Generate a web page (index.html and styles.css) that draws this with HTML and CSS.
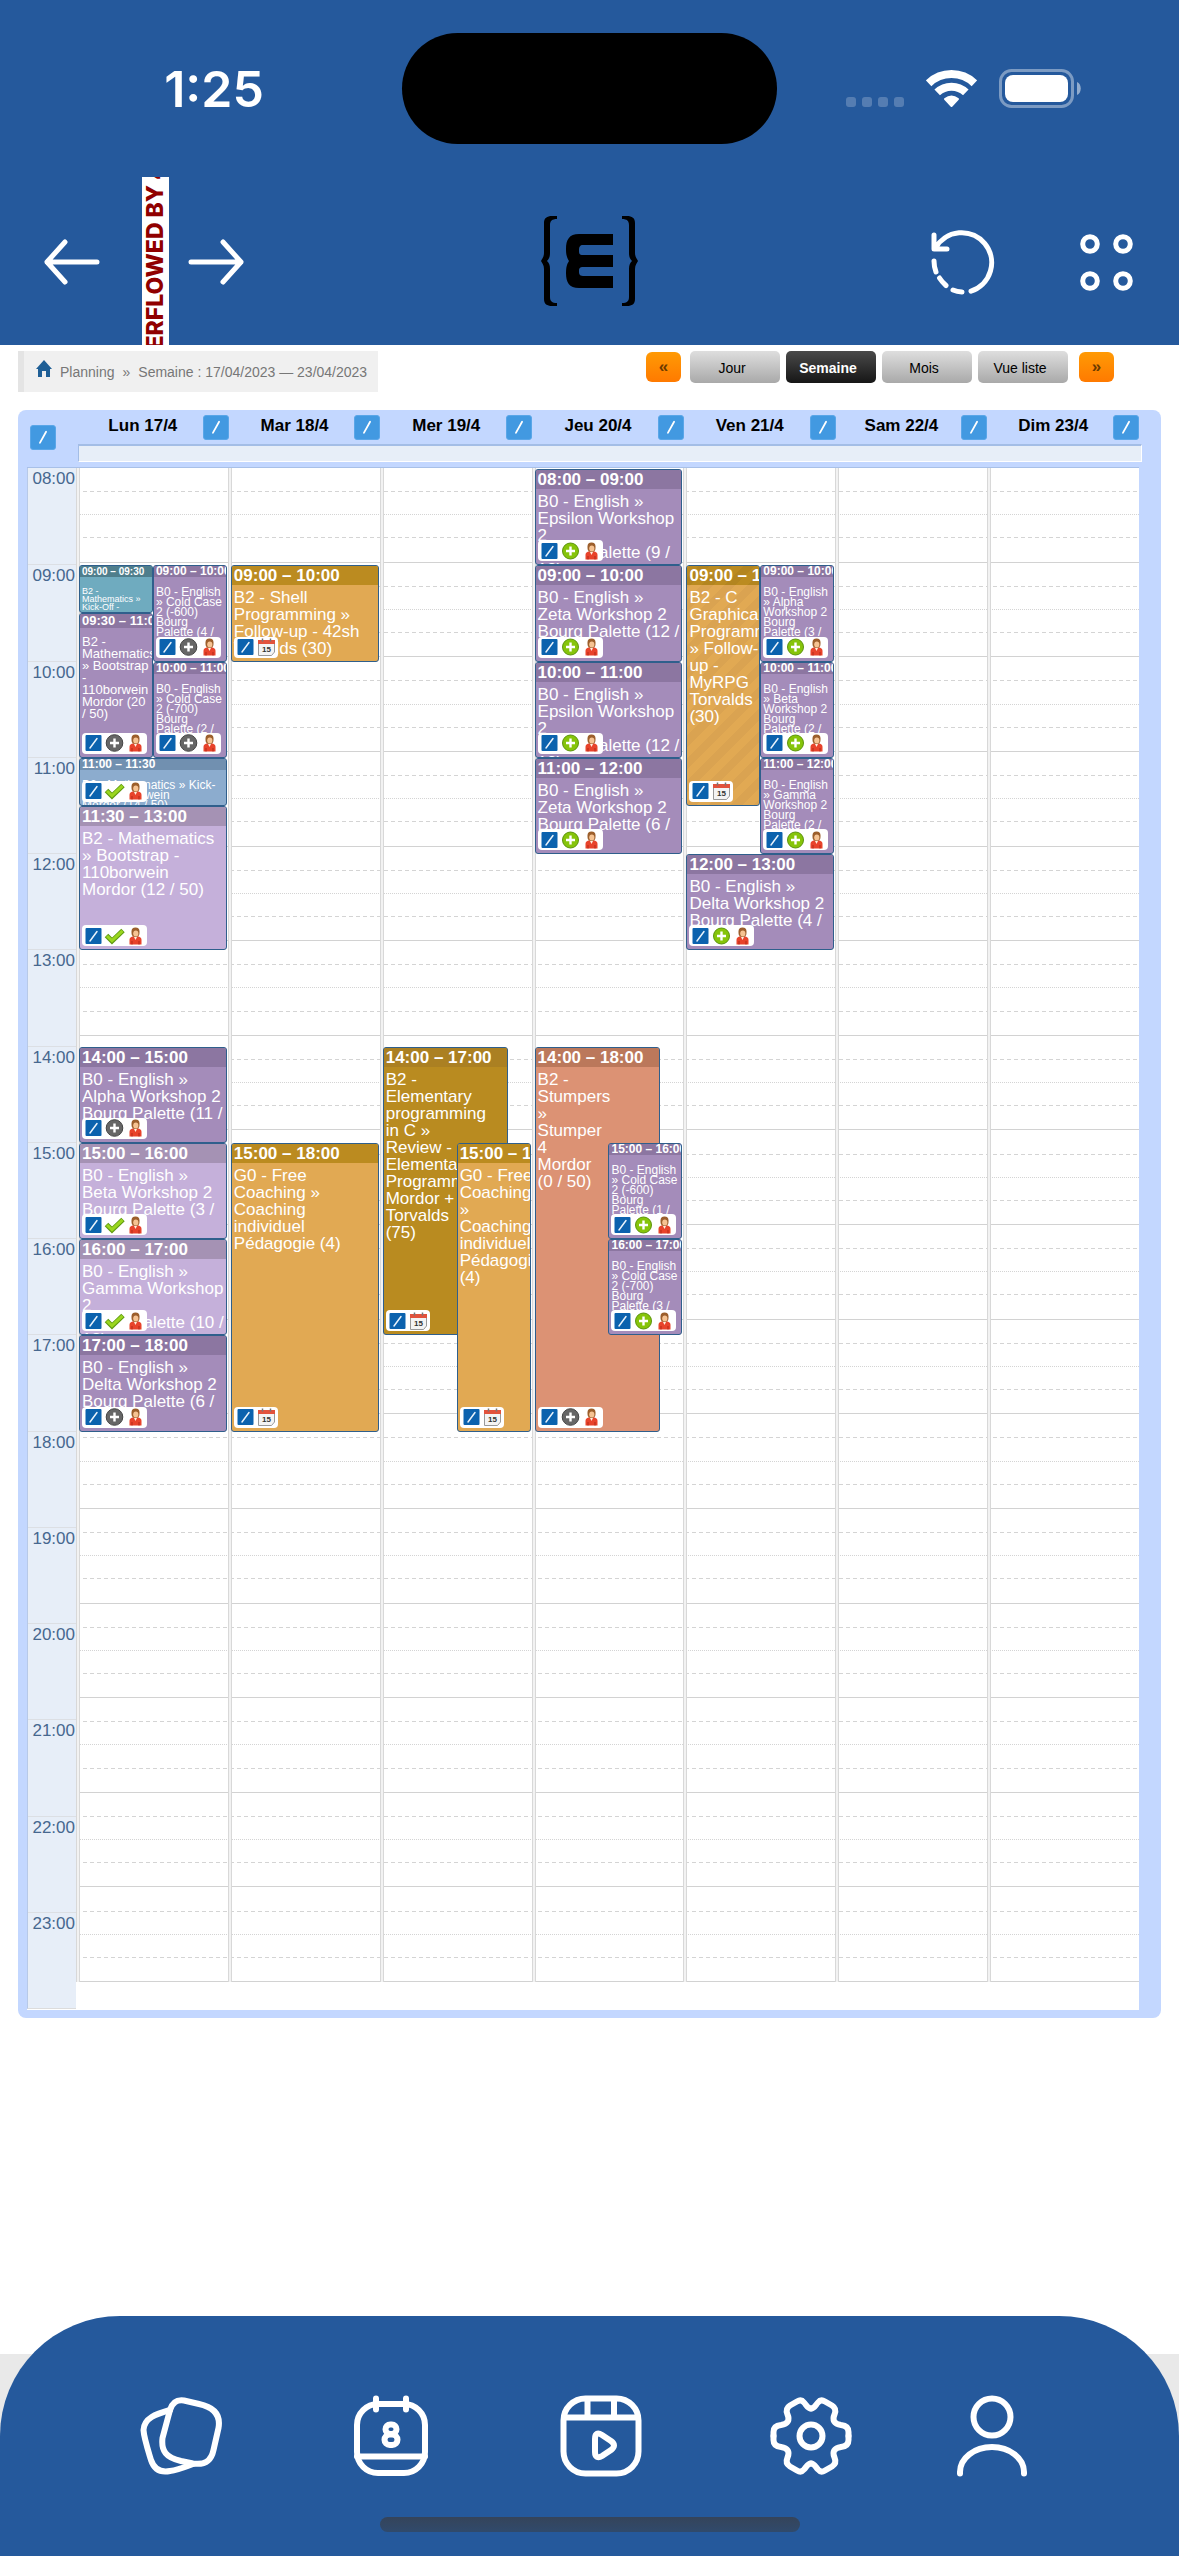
FILE: index.html
```html
<!DOCTYPE html>
<html lang="fr">
<head>
<meta charset="utf-8">
<meta name="viewport" content="width=device-width, initial-scale=1">
<title>Planning</title>
<link rel="stylesheet" href="styles.css">
</head>
<body>
<svg class="sprite" aria-hidden="true">
  <symbol id="edit" viewBox="0 0 18 18"><rect x="1" y="1" width="16" height="16" rx="1" fill="#0b62ae"/><path d="M5.500 14 12.500 4.500" stroke="#e8f2fb" stroke-width="1.500" stroke-linecap="round"/></symbol>
  <symbol id="pen" viewBox="0 0 26 26"><path d="M9.500 19 16.500 6.500" stroke="#fff" stroke-width="2" stroke-linecap="round"/></symbol>
  <symbol id="plus-grey" viewBox="0 0 18 18"><circle cx="9" cy="9" r="8.300" fill="#666" stroke="#444"/><path d="M9 4.500v9M4.500 9h9" stroke="#fff" stroke-width="2.400"/></symbol>
  <symbol id="plus-green" viewBox="0 0 18 18"><circle cx="9" cy="9" r="8" fill="#86c40a" stroke="#5d9410"/><path d="M9 4.500v9M4.500 9h9" stroke="#fff" stroke-width="2.400"/></symbol>
  <symbol id="check" viewBox="0 0 20 18"><path d="M2 8.500 7.500 14 18.500 3.500" fill="none" stroke="#5f9a12" stroke-width="5"/><path d="M2.500 9 7.500 13.700 18 3.900" fill="none" stroke="#9ad61f" stroke-width="3"/></symbol>
  <symbol id="person" viewBox="0 0 14 18"><path d="M1 17.500V13c0-3 3-4 6-4s6 1 6 4v4.500Z" fill="#e8432b"/><path d="M5 9h4l-2 4Z" fill="#fff0e0"/><rect x="3" y="0.500" width="8" height="9.500" rx="4" fill="#9c5f2c"/><ellipse cx="7.300" cy="6.500" rx="2.600" ry="3" fill="#f6c392"/><path d="M3.500 14v3.500M10.500 14v3.500" stroke="#b52a18"/></symbol>
  <symbol id="event-day" viewBox="0 0 18 18"><path d="M1 3h16v11l-3 3.500H1Z" fill="#f4f4f4" stroke="#999"/><path d="M.5 2h17v4H.5Z" fill="#e2523c"/><path d="M5 .5v3M13 .5v3" stroke="#777" stroke-width="1.500"/><text x="9" y="14" text-anchor="middle" class="cal-day">15</text></symbol>
</svg>

<header class="top">
  <div class="status">
    <time class="clock">1:25</time>
    <div class="island"></div>
    <div class="indicators">
      <svg width="58" height="37" viewBox="0 0 58 37" fill="#fff" opacity=".22"><rect y="27" width="10" height="10" rx="3"/><rect x="16" y="27" width="10" height="10" rx="3"/><rect x="32" y="27" width="10" height="10" rx="3"/><rect x="48" y="27" width="10" height="10" rx="3"/></svg>
      <svg width="51" height="38" viewBox="0 0 51 38" fill="none" stroke="#fff" stroke-width="8"><path d="M2.600 13.300A33 33 0 0 1 48.400 13.300"/><path d="M11.200 22.400A20.600 20.600 0 0 1 39.800 22.400"/><path d="M25.500 36 19 29Q25.500 24 32 29Z" fill="#fff" stroke-width="2" stroke-linejoin="round"/></svg>
      <svg width="82" height="39" viewBox="0 0 82 39"><rect x="1.500" y="1.500" width="72" height="36" rx="11" fill="none" stroke="#fff" stroke-opacity=".4" stroke-width="3"/><rect x="6" y="6" width="63" height="27" rx="8" fill="#fff"/><path d="M78 13c5 2 5 11 0 13Z" fill="#fff" fill-opacity=".5"/></svg>
    </div>
  </div>
  <div class="appbar">
    <div class="history">
      <button type="button" aria-label="Page précédente"><svg width="56" height="48" viewBox="0 0 56 48" class="line"><path d="M53 25H3M21 5 3 25 21 45"/></svg></button>
      <div class="overflow-strip"><span>ERFLOWED BY 4</span></div>
      <button type="button" aria-label="Page suivante"><svg width="56" height="48" viewBox="0 0 56 48" class="line"><path d="M3 25H53M35 5 53 25 35 45"/></svg></button>
    </div>
    <svg class="logo" width="97" height="92" viewBox="0 0 97 92"><path id="brace" d="M16 1H11C6 1 3 3 3 8V38C3 42 1 44 0 46 1 48 3 50 3 54V84C3 89 6 91 11 91H16V88C11 88 9 86 9 82V54C9 50 8 48 6 46 8 44 9 42 9 38V10C9 6 11 4 16 4Z"/><use href="#brace" transform="translate(97 0) scale(-1 1)"/><path d="M72 19H38C28 19 25 25 25 34 25 40 26 43 28 46 26 49 25 52 25 58 25 67 28 73 38 73H72V61H42C38 61 38 58 38 56 38 53 39 52 42 52H72V40H42C38 40 38 38 38 35 38 32 39 30 42 30H72Z"/></svg>
    <div class="actions">
      <button type="button" aria-label="Recharger"><svg width="70" height="70" viewBox="0 0 70 70" class="line"><path d="M5 8V22H18M6.500 21A30 30 0 1 1 42 64.200M5 34Q5 40 7 45M10.500 51Q13 55 17 58.500M24 63Q28 64.700 33 65"/></svg></button>
      <button type="button" aria-label="Menu"><svg width="54" height="58" viewBox="0 0 54 58" class="line"><circle cx="10" cy="11" r="7.300"/><circle cx="43" cy="11" r="7.300"/><circle cx="10" cy="48" r="7.300"/><circle cx="43" cy="48" r="7.300"/></svg></button>
    </div>
  </div>
</header>

<main class="content">
  <div class="toolbar">
    <nav class="crumbs" aria-label="Fil d'Ariane">
      <svg width="16" height="18" viewBox="0 0 16 18"><path d="M8 0 16 9H14V17H10V11H6V17H2V9H0Z" fill="#1f5f96"/></svg>
      <a href="#planning">Planning</a> <span>»</span> <a href="#semaine">Semaine : 17/04/2023 — 23/04/2023</a>
    </nav>
    <div class="views">
      <button type="button" class="step" aria-label="Semaine précédente">«</button>
      <button type="button" class="view">Jour</button>
      <button type="button" class="view current">Semaine</button>
      <button type="button" class="view">Mois</button>
      <button type="button" class="view">Vue liste</button>
      <button type="button" class="step next" aria-label="Semaine suivante">»</button>
    </div>
  </div>

  <section class="calendar">
    <div class="cal-head">
      <button type="button" class="pen corner" aria-label="Modifier"><svg><use href="#pen"/></svg></button>
      <div class="day-names">
        <div><b>Lun 17/4</b><button type="button" class="pen" aria-label="Modifier lundi"><svg><use href="#pen"/></svg></button></div>
        <div><b>Mar 18/4</b><button type="button" class="pen" aria-label="Modifier mardi"><svg><use href="#pen"/></svg></button></div>
        <div><b>Mer 19/4</b><button type="button" class="pen" aria-label="Modifier mercredi"><svg><use href="#pen"/></svg></button></div>
        <div><b>Jeu 20/4</b><button type="button" class="pen" aria-label="Modifier jeudi"><svg><use href="#pen"/></svg></button></div>
        <div><b>Ven 21/4</b><button type="button" class="pen" aria-label="Modifier vendredi"><svg><use href="#pen"/></svg></button></div>
        <div><b>Sam 22/4</b><button type="button" class="pen" aria-label="Modifier samedi"><svg><use href="#pen"/></svg></button></div>
        <div><b>Dim 23/4</b><button type="button" class="pen" aria-label="Modifier dimanche"><svg><use href="#pen"/></svg></button></div>
      </div>
      <div class="all-day"></div>
    </div>
    <div class="cal-body">
      <div class="hours">
        <span>08:00</span><span>09:00</span><span>10:00</span><span>11:00</span><span>12:00</span><span>13:00</span><span>14:00</span><span>15:00</span><span>16:00</span><span>17:00</span><span>18:00</span><span>19:00</span><span>20:00</span><span>21:00</span><span>22:00</span><span>23:00</span>
      </div>
      <div class="lines"><i></i><i></i><i></i><i></i><i></i><i></i><i></i><i></i><i></i><i></i><i></i><i></i><i></i><i></i><i></i><i></i></div>
      <div class="days">
        <div class="day"><div class="events">
          <article class="event tiny left teal h9 to930"><h3>09:00 – 09:30</h3><p>B2 -<br>Mathematics »<br>Kick-Off -</p></article>
          <article class="event medium left purple h930 to11"><h3>09:30 – 11:00</h3><p>B2 -<br>Mathematics<br>» Bootstrap<br>-<br>110borwein<br>Mordor (20<br>/ 50)</p><div class="badge"><svg><use href="#edit"/></svg><svg><use href="#plus-grey"/></svg><svg><use href="#person"/></svg></div></article>
          <article class="event small right purple h9 to10"><h3>09:00 – 10:00</h3><p>B0 - English<br>» Cold Case<br>2 (-600)<br>Bourg<br>Palette (4 /</p><div class="badge"><svg><use href="#edit"/></svg><svg><use href="#plus-grey"/></svg><svg><use href="#person"/></svg></div></article>
          <article class="event small right purple h10 to11"><h3>10:00 – 11:00</h3><p>B0 - English<br>» Cold Case<br>2 (-700)<br>Bourg<br>Palette (2 /</p><div class="badge"><svg><use href="#edit"/></svg><svg><use href="#plus-grey"/></svg><svg><use href="#person"/></svg></div></article>
          <article class="event small blue h11 to1130"><h3>11:00 – 11:30</h3><p>B2 - Mathematics » Kick-<br>Off - 110borwein<br>Mordor (14 / 50)</p><div class="badge"><svg><use href="#edit"/></svg><svg><use href="#check"/></svg><svg><use href="#person"/></svg></div></article>
          <article class="event lilac h1130 to13"><h3>11:30 – 13:00</h3><p>B2 - Mathematics<br>» Bootstrap -<br>110borwein<br>Mordor (12 / 50)</p><div class="badge"><svg><use href="#edit"/></svg><svg><use href="#check"/></svg><svg><use href="#person"/></svg></div></article>
          <article class="event purple h14 to15"><h3>14:00 – 15:00</h3><p>B0 - English »<br>Alpha Workshop 2<br>Bourg Palette (11 /</p><div class="badge"><svg><use href="#edit"/></svg><svg><use href="#plus-grey"/></svg><svg><use href="#person"/></svg></div></article>
          <article class="event lilac h15 to16"><h3>15:00 – 16:00</h3><p>B0 - English »<br>Beta Workshop 2<br>Bourg Palette (3 /</p><div class="badge"><svg><use href="#edit"/></svg><svg><use href="#check"/></svg><svg><use href="#person"/></svg></div></article>
          <article class="event lilac h16 to17"><h3>16:00 – 17:00</h3><p>B0 - English »<br>Gamma Workshop<br>2<br>Bourg Palette (10 /<br>12)</p><div class="badge"><svg><use href="#edit"/></svg><svg><use href="#check"/></svg><svg><use href="#person"/></svg></div></article>
          <article class="event purple h17 to18"><h3>17:00 – 18:00</h3><p>B0 - English »<br>Delta Workshop 2<br>Bourg Palette (6 /</p><div class="badge"><svg><use href="#edit"/></svg><svg><use href="#plus-grey"/></svg><svg><use href="#person"/></svg></div></article>
        </div></div>
        <div class="day"><div class="events">
          <article class="event orange h9 to10"><h3>09:00 – 10:00</h3><p>B2 - Shell<br>Programming »<br>Follow-up - 42sh<br>Torvalds (30)</p><div class="badge"><svg><use href="#edit"/></svg><svg><use href="#event-day"/></svg></div></article>
          <article class="event orange h15 to18"><h3>15:00 – 18:00</h3><p>G0 - Free<br>Coaching »<br>Coaching<br>individuel<br>Pédagogie (4)</p><div class="badge"><svg><use href="#edit"/></svg><svg><use href="#event-day"/></svg></div></article>
        </div></div>
        <div class="day"><div class="events">
          <article class="event under gold h14 to17"><h3>14:00 – 17:00</h3><p>B2 -<br>Elementary<br>programming<br>in C »<br>Review -<br>Elementary<br>Programming<br>Mordor +<br>Torvalds<br>(75)</p><div class="badge"><svg><use href="#edit"/></svg><svg><use href="#event-day"/></svg></div></article>
          <article class="event right orange h15 to18"><h3>15:00 – 18:00</h3><p>G0 - Free<br>Coaching<br>»<br>Coaching<br>individuel<br>Pédagogie<br>(4)</p><div class="badge"><svg><use href="#edit"/></svg><svg><use href="#event-day"/></svg></div></article>
        </div></div>
        <div class="day"><div class="events">
          <article class="event purple h8 to9"><h3>08:00 – 09:00</h3><p>B0 - English »<br>Epsilon Workshop<br>2<br>Bourg Palette (9 /<br>12)</p><div class="badge"><svg><use href="#edit"/></svg><svg><use href="#plus-green"/></svg><svg><use href="#person"/></svg></div></article>
          <article class="event purple h9 to10"><h3>09:00 – 10:00</h3><p>B0 - English »<br>Zeta Workshop 2<br>Bourg Palette (12 /</p><div class="badge"><svg><use href="#edit"/></svg><svg><use href="#plus-green"/></svg><svg><use href="#person"/></svg></div></article>
          <article class="event purple h10 to11"><h3>10:00 – 11:00</h3><p>B0 - English »<br>Epsilon Workshop<br>2<br>Bourg Palette (12 /<br>12)</p><div class="badge"><svg><use href="#edit"/></svg><svg><use href="#plus-green"/></svg><svg><use href="#person"/></svg></div></article>
          <article class="event purple h11 to12"><h3>11:00 – 12:00</h3><p>B0 - English »<br>Zeta Workshop 2<br>Bourg Palette (6 /</p><div class="badge"><svg><use href="#edit"/></svg><svg><use href="#plus-green"/></svg><svg><use href="#person"/></svg></div></article>
          <article class="event under salmon h14 to18"><h3>14:00 – 18:00</h3><p>B2 -<br>Stumpers<br>»<br>Stumper<br>4<br>Mordor<br>(0 / 50)</p><div class="badge"><svg><use href="#edit"/></svg><svg><use href="#plus-grey"/></svg><svg><use href="#person"/></svg></div></article>
          <article class="event small right purple h15 to16"><h3>15:00 – 16:00</h3><p>B0 - English<br>» Cold Case<br>2 (-600)<br>Bourg<br>Palette (1 /</p><div class="badge"><svg><use href="#edit"/></svg><svg><use href="#plus-green"/></svg><svg><use href="#person"/></svg></div></article>
          <article class="event small right purple h16 to17"><h3>16:00 – 17:00</h3><p>B0 - English<br>» Cold Case<br>2 (-700)<br>Bourg<br>Palette (3 /</p><div class="badge"><svg><use href="#edit"/></svg><svg><use href="#plus-green"/></svg><svg><use href="#person"/></svg></div></article>
        </div></div>
        <div class="day"><div class="events">
          <article class="event left orange striped h9 to1130"><h3>09:00 – 11:30</h3><p>B2 - C<br>Graphical<br>Programming<br>» Follow-<br>up -<br>MyRPG<br>Torvalds<br>(30)</p><div class="badge"><svg><use href="#edit"/></svg><svg><use href="#event-day"/></svg></div></article>
          <article class="event small right purple h9 to10"><h3>09:00 – 10:00</h3><p>B0 - English<br>» Alpha<br>Workshop 2<br>Bourg<br>Palette (3 /</p><div class="badge"><svg><use href="#edit"/></svg><svg><use href="#plus-green"/></svg><svg><use href="#person"/></svg></div></article>
          <article class="event small right purple h10 to11"><h3>10:00 – 11:00</h3><p>B0 - English<br>» Beta<br>Workshop 2<br>Bourg<br>Palette (2 /</p><div class="badge"><svg><use href="#edit"/></svg><svg><use href="#plus-green"/></svg><svg><use href="#person"/></svg></div></article>
          <article class="event small right purple h11 to12"><h3>11:00 – 12:00</h3><p>B0 - English<br>» Gamma<br>Workshop 2<br>Bourg<br>Palette (2 /</p><div class="badge"><svg><use href="#edit"/></svg><svg><use href="#plus-green"/></svg><svg><use href="#person"/></svg></div></article>
          <article class="event purple h12 to13"><h3>12:00 – 13:00</h3><p>B0 - English »<br>Delta Workshop 2<br>Bourg Palette (4 /</p><div class="badge"><svg><use href="#edit"/></svg><svg><use href="#plus-green"/></svg><svg><use href="#person"/></svg></div></article>
        </div></div>
        <div class="day"></div>
        <div class="day"></div>
      </div>
    </div>
  </section>
</main>

<footer class="dock">
  <nav class="tabs" aria-label="Navigation principale">
    <div class="tab-row">
      <a href="#cartes" aria-label="Cartes"><svg viewBox="0 0 84 84" class="line bold"><path d="M45 6.500 60 10C74 13 82 20 79.500 34L74.500 56C72 68 65 71 54 69.500L42 67C27 63.500 22 57 23.500 44L31 16C33.500 8 38 5.500 45 6.500Z"/><path d="M31 16C17 20 5 24 4.500 36 5 44 9 56 12 66 15 75 21 79 31 77 39 76 46 73 54 70"/></svg></a>
      <a href="#planning" aria-label="Planning"><svg viewBox="0 0 84 84" class="line bold"><rect x="8" y="10" width="68" height="69" rx="21"/><path d="M27 4.500V15.500M57 4.500V15.500M8 62.500H76"/><rect x="36.500" y="30.500" width="11" height="9.500" rx="4.700"/><rect x="35.500" y="40.500" width="13" height="10.500" rx="5.200"/></svg></a>
      <a href="#videos" aria-label="Vidéos"><svg viewBox="0 0 84 84" class="line bold"><rect x="4.500" y="4.500" width="75" height="75" rx="22"/><path d="M5 23.500H79M28.500 5V23M55 5V23M36 45C36 39 39 38.500 43 41L52 47C56 50 56 53 52 56L43 62C39 64.500 36 63 36 58Z"/></svg></a>
      <a href="#reglages" aria-label="Réglages"><svg viewBox="0 0 84 84" class="line bold"><path id="cog" d="M42 14.500C45.500 14.500 46.500 11 49 8.500 51 6 53.500 6 56 7.500L63 11.500C67 14 67 17 65.500 20.500 63 26 65 30 72 31 77 31.500 79.500 34 79.500 38V42"/><use href="#cog" transform="matrix(-1 0 0 1 84 0)"/><use href="#cog" transform="matrix(1 0 0 -1 0 84)"/><use href="#cog" transform="matrix(-1 0 0 -1 84 84)"/><circle cx="42" cy="42" r="11.500"/></svg></a>
      <a href="#profil" aria-label="Profil"><svg viewBox="0 0 84 84" class="line bold"><circle cx="42" cy="23" r="18.500"/><path d="M10 79.500V78A32 25 0 0 1 74 78V79.500"/></svg></a>
    </div>
    <div class="home-bar"></div>
  </nav>
</footer>
</body>
</html>
```

FILE: styles.css
```css
* { box-sizing: border-box; }

body {
  margin: 0;
  min-height: 100vh;
  display: flex;
  flex-direction: column;
  background: #fff;
  font-family: "Liberation Sans", Arial, sans-serif;
}

button {
  padding: 0;
  border: 0;
  background: none;
  font: inherit;
  color: inherit;
}

svg { display: block; }
.sprite { position: absolute; width: 0; height: 0; }
.cal-day { font: bold 8px "Liberation Sans", Arial, sans-serif; fill: #333; }

.line {
  fill: none;
  stroke: #fff;
  stroke-width: 5;
  stroke-linecap: round;
  stroke-linejoin: round;
}
.line.bold { stroke-width: 6; }

/* Status bar and app bar */
.top { background: #25599c; }

.status {
  display: grid;
  grid-template-columns: 1fr 375px 1fr;
  align-items: center;
  padding: 33px 0;
}
.clock {
  padding-left: 26px;
  text-align: center;
  color: #fff;
  font: 600 50px/60px Inter, sans-serif;
}
.island { height: 111px; border-radius: 56px; background: #000; }
.indicators {
  display: flex;
  justify-content: flex-end;
  align-items: center;
  gap: 22px;
  padding-right: 98px;
}

.appbar {
  display: grid;
  grid-template-columns: 1fr auto 1fr;
  align-items: center;
  height: 168px;
}
.history { display: flex; align-items: center; padding-left: 44px; }
.overflow-strip {
  display: flex;
  align-items: center;
  justify-content: center;
  width: 27px;
  height: 168px;
  padding-bottom: 8px;
  margin: 0 19px 0 42px;
  overflow: hidden;
  background: #fff;
}
.overflow-strip span {
  writing-mode: vertical-rl;
  rotate: 180deg;
  white-space: nowrap;
  color: #900000;
  font: 800 23px/27px Inter, sans-serif;
}
.actions {
  display: flex;
  justify-content: flex-end;
  align-items: center;
  gap: 81px;
  padding: 2px 45px 0 0;
}

/* Toolbar */
.content { flex: 1; padding: 6px 18px 0; }

.toolbar {
  display: flex;
  justify-content: space-between;
  align-items: flex-start;
  margin-bottom: 18px;
}
.crumbs {
  display: flex;
  align-items: center;
  gap: 8px;
  height: 41px;
  padding: 0 11px 0 12px;
  border-left: 6px solid #e4e4e4;
  background: #f0f0f0;
  color: #777;
  font-size: 14px;
  white-space: nowrap;
}
.crumbs svg { margin-top: -6px; }
.crumbs a { color: inherit; text-decoration: none; }

.views { display: flex; align-items: center; gap: 6px; padding-right: 47px; }
.view {
  width: 90px;
  height: 32px;
  padding: 2px 6px 0 0;
  border-radius: 5px;
  background: linear-gradient(#dedede, #a9a9a9);
  color: #000;
  font-size: 14px;
}
.view.current { background: linear-gradient(#4a4a4a, #161616); color: #fff; font-weight: bold; }
.step {
  width: 35px;
  height: 30px;
  margin-right: 3px;
  border-radius: 6px;
  background: linear-gradient(#ff9a05, #ff7a00);
  color: #6b3a00;
  font-size: 17px;
  font-weight: bold;
}
.step.next { margin: 0 0 0 5px; }

/* Calendar frame */
.calendar {
  padding: 0 22px 8px 9px;
  border-radius: 8px;
  background: #c3d7ff;
}
.cal-head {
  display: grid;
  grid-template-columns: 50px 1fr;
  grid-template-rows: 34px 18px;
  padding-bottom: 5px;
  border-bottom: 1px solid #a8c0e8;
}
.corner { grid-row: 1 / 3; margin: 15px 0 0 3px; }
.day-names { display: grid; grid-template-columns: repeat(7, 1fr); padding-top: 5px; }
.day-names div { display: flex; }
.day-names b {
  flex: 1;
  padding-left: 6px;
  text-align: center;
  font-size: 17px;
  line-height: 22px;
}
.pen {
  width: 26px;
  height: 25px;
  border: 1px solid #5aa6e8;
  border-radius: 3px;
  background: #4299e1;
}
.pen svg { width: 24px; height: 23px; }
.all-day {
  margin: 0 -3px 0 1px;
  border: 1px solid #fff;
  border-top: 2px solid #a3bde6;
  border-left-color: #a3bde6;
  background: #e7eef8;
}

.cal-body {
  display: grid;
  grid-template-columns: 49px 1fr;
  align-items: start;
  padding-bottom: 1px;
  background: #fff;
}
.hours {
  display: grid;
  grid-template-rows: repeat(16, 1fr);
  height: 1541px;
  border-left: 1px solid #b7c9e8;
  border-bottom: 1px solid #dcdcdc;
  background: #e7eef8;
  color: #46678f;
  font-size: 17px;
  line-height: 21px;
  text-align: right;
}
.hours span { padding-right: 1px; }
.hours span + span { border-top: 1px solid #dcdfe4; }

.lines, .days { grid-area: 1 / 2; height: 1514px; }
.lines { display: grid; grid-template-rows: repeat(16, 1fr); }
.lines i {
  border-bottom: 1px solid #d2d2d2;
  background:
    repeating-linear-gradient(90deg, #d4d4d4 0 4px, transparent 4px 7px) 0 25% / 100% 1px no-repeat,
    repeating-linear-gradient(90deg, #d4d4d4 0 1px, transparent 1px 2px) 0 50% / 100% 1px no-repeat,
    repeating-linear-gradient(90deg, #d4d4d4 0 4px, transparent 4px 7px) 0 75% / 100% 1px no-repeat;
}
.days { display: grid; grid-template-columns: repeat(7, 1fr); grid-template-rows: 100%; }
.day {
  min-width: 0;
  border-left: 4px double #d8d8d8;
  background: linear-gradient(#f2f2f2, #f2f2f2) 0 0 / 4px 100% no-repeat border-box;
}
.events {
  display: grid;
  grid-template-columns: 10fr 7fr 3fr;
  grid-template-rows: repeat(32, 1fr);
  height: 1540px;
  margin: 1px 1px 0 -1px;
}

/* Events: one grid row per half hour, starting at 08:00 */
.event {
  grid-column: 1 / 4;
  position: relative;
  min-width: 0;
  min-height: 0;
  overflow: hidden;
  border: 1px solid #2f5f8c;
  border-radius: 3px;
  color: #fff;
  font-size: 17px;
  line-height: 17px;
  white-space: nowrap;
}
.event.left { grid-column: 1 / 2; }
.event.right { grid-column: 2 / 4; }
.event.under { grid-column: 1 / 3; }

.event h3 {
  margin: 0;
  padding-left: 2px;
  font-size: 17px;
  line-height: 19px;
}
.event p { margin: 4px 0 0 2px; }

.event.medium { font-size: 13px; line-height: 12px; }
.event.medium h3 { font-size: 13px; line-height: 14px; }
.event.medium p { margin-top: 8px; }
.event.small { font-size: 12px; line-height: 10px; }
.event.small h3 { font-size: 12px; line-height: 11px; }
.event.small p { margin-top: 10px; }
.event.tiny { font-size: 9px; line-height: 8px; }
.event.tiny h3 { font-size: 10px; line-height: 11px; }
.event.tiny p { margin-top: 10px; }

.badge {
  position: absolute;
  left: 2px;
  bottom: 3px;
  display: flex;
  align-items: center;
  height: 21px;
  padding: 0 1px;
  border-radius: 4px;
  background: #fff;
}
.badge svg { width: 21px; height: 18px; }

.purple { background: #a48cba; }
.purple h3 { background: #8c76a1; }
.lilac { background: #c5b0da; }
.lilac h3 { background: #a592b4; }
.orange { background: #e1a953; }
.orange h3 { background: #bb8b20; }
.gold { background: #b98b20; }
.gold h3 { background: #ab8022; }
.salmon { background: #dc9274; }
.salmon h3 { background: #bb785b; }
.teal { background: #6fabbf; }
.teal h3 { background: #4f7e8c; }
.blue { background: #8cacce; }
.blue h3 { background: #7190b0; }
.striped { background: repeating-linear-gradient(135deg, #e1a953 0 8px, #daa351 8px 16px); }
.striped h3 { background: repeating-linear-gradient(135deg, #bb8b20 0 8px, #b3851f 8px 16px); }

.h8 { grid-row-start: 1; }
.h9 { grid-row-start: 3; }
.h930 { grid-row-start: 4; }
.h10 { grid-row-start: 5; }
.h11 { grid-row-start: 7; }
.h1130 { grid-row-start: 8; }
.h12 { grid-row-start: 9; }
.h14 { grid-row-start: 13; }
.h15 { grid-row-start: 15; }
.h16 { grid-row-start: 17; }
.h17 { grid-row-start: 19; }
.to9 { grid-row-end: 3; }
.to930 { grid-row-end: 4; }
.to10 { grid-row-end: 5; }
.to11 { grid-row-end: 7; }
.to1130 { grid-row-end: 8; }
.to12 { grid-row-end: 9; }
.to13 { grid-row-end: 11; }
.to15 { grid-row-end: 15; }
.to16 { grid-row-end: 17; }
.to17 { grid-row-end: 19; }
.to18 { grid-row-end: 21; }

/* Bottom navigation */
.dock { background: linear-gradient(#fff 38px, #e9e9e9 38px); }
.tabs {
  padding: 78px 0 24px;
  border-radius: 120px 120px 0 0;
  background: #25599c;
}
.tab-row {
  display: grid;
  grid-template-columns: repeat(4, 210fr) 151fr;
  justify-items: center;
  padding: 0 112px 0 76px;
}
.tab-row svg { width: 84px; height: 84px; }
.home-bar {
  width: 420px;
  height: 15px;
  margin: 39px auto 0;
  border-radius: 8px;
  background: linear-gradient(#35445a, #304a6c);
}
```
